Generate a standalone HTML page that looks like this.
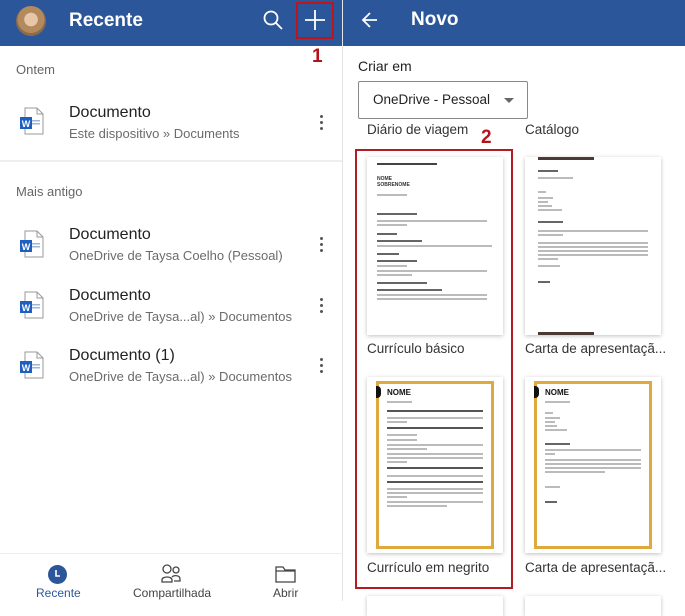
<!DOCTYPE html>
<html><head><meta charset="utf-8"><style>
*{margin:0;padding:0;box-sizing:border-box}
body{width:685px;height:601px;overflow:hidden;background:#fff;font-family:"Liberation Sans",Arial,sans-serif;position:relative}
.a{position:absolute;white-space:nowrap}
.hdr{position:absolute;top:0;height:46px;background:#2b579a}
.t{font-size:16px;color:#222}
.s{font-size:13px;color:#6b6b6b}
.g{font-size:13px;color:#666}
.keb{position:absolute;width:4px}
.keb i{display:block;width:3px;height:3px;border-radius:50%;background:#555;margin-bottom:3px}
.card{position:absolute;background:#fff;box-shadow:0 1px 4px rgba(0,0,0,.25)}
.ln{position:absolute;height:1.5px;background:#bbb}
.lbl{font-size:13.5px;color:#333}
</style></head><body>
<div class="hdr" style="left:0;width:342px"></div>
<div class="hdr" style="left:343px;width:342px"></div>
<div class="a" style="left:342px;top:0;width:1px;height:601px;background:#e5e5e5"></div>
<div class="a" style="left:16px;top:6px;width:30px;height:30px;border-radius:50%;background:radial-gradient(circle at 50% 45%,#e8c6a8 0 30%,#b28a5e 31% 60%,#8c6a4a 61%)"></div>
<div class="a" style="left:69px;top:10px;font-size:19px;font-weight:bold;color:#fff">Recente</div>
<svg class="a" style="left:262px;top:9px" width="22" height="22" viewBox="0 0 22 22"><circle cx="9" cy="9" r="6.5" fill="none" stroke="#fff" stroke-width="1.8"/><line x1="14" y1="14" x2="20" y2="20" stroke="#fff" stroke-width="1.8"/></svg>
<svg class="a" style="left:304px;top:9px" width="22" height="22"><line x1="11" y1="1" x2="11" y2="21" stroke="#fff" stroke-width="1.8"/><line x1="1" y1="11" x2="21" y2="11" stroke="#fff" stroke-width="1.8"/></svg>
<div class="a" style="left:296px;top:2px;width:38px;height:37px;border:2px solid #c0141b"></div>
<div class="a" style="left:312px;top:46px;font-size:19px;font-weight:bold;color:#b5121b">1</div>

<div class="a g" style="left:16px;top:62px">Ontem</div>
<div class="a" style="left:0;top:160px;width:342px;height:2px;background:#eee"></div>
<div class="a g" style="left:16px;top:184px">Mais antigo</div>

<div class="a t" style="left:69px;top:104px">Documento</div><div class="a s" style="left:69px;top:126px">Este dispositivo » Documents</div>
<div class="a t" style="left:69px;top:226px">Documento</div><div class="a s" style="left:69px;top:248px">OneDrive de Taysa Coelho (Pessoal)</div>
<div class="a t" style="left:69px;top:287px">Documento</div><div class="a s" style="left:69px;top:309px">OneDrive de Taysa...al) » Documentos</div>
<div class="a t" style="left:69px;top:347px">Documento (1)</div><div class="a s" style="left:69px;top:369px">OneDrive de Taysa...al) » Documentos</div>

<svg width="0" height="0" style="position:absolute"><defs><g id="w"><path d="M6 1h12l6 6v20H6z" fill="#fff" stroke="#999" stroke-width="1"/><path d="M18 1v6h6" fill="none" stroke="#999"/><rect x="12" y="13" width="9" height="1.5" fill="#9ab8e0"/><rect x="12" y="16" width="9" height="1.5" fill="#9ab8e0"/><rect x="1" y="10" width="12" height="12" fill="#1f5fbf"/><text x="7" y="20" font-size="9" font-weight="bold" fill="#fff" text-anchor="middle" font-family="Liberation Sans">W</text></g></defs></svg>
<svg class="a" style="left:19px;top:107px" width="26" height="30"><use href="#w"/></svg>
<svg class="a" style="left:19px;top:230px" width="26" height="30"><use href="#w"/></svg>
<svg class="a" style="left:19px;top:291px" width="26" height="30"><use href="#w"/></svg>
<svg class="a" style="left:19px;top:351px" width="26" height="30"><use href="#w"/></svg>
<div class="keb" style="left:320px;top:115px"><i></i><i></i><i></i></div>
<div class="keb" style="left:320px;top:237px"><i></i><i></i><i></i></div>
<div class="keb" style="left:320px;top:298px"><i></i><i></i><i></i></div>
<div class="keb" style="left:320px;top:358px"><i></i><i></i><i></i></div>

<div class="a" style="left:0;top:553px;width:342px;height:1px;background:#eee"></div>
<div class="a" style="left:48px;top:565px;width:19px;height:19px;border-radius:50%;background:#2b579a"></div>
<svg class="a" style="left:48px;top:565px" width="19" height="19"><path d="M8 5v6h4" fill="none" stroke="#fff" stroke-width="1.6"/></svg>
<div class="a" style="left:36px;top:586px;font-size:12px;color:#2b579a">Recente</div>
<svg class="a" style="left:160px;top:563px" width="22" height="22" fill="none" stroke="#444" stroke-width="1.3"><circle cx="7" cy="6" r="4"/><circle cx="16" cy="7" r="3"/><path d="M2 17c0-4 10-4 10 0v2H2z"/><path d="M12 14c2-2 8-2 8 2v2h-6"/></svg>
<div class="a" style="left:133px;top:586px;font-size:12px;color:#444">Compartilhada</div>
<svg class="a" style="left:275px;top:565px" width="22" height="18" fill="none" stroke="#444" stroke-width="1.3"><path d="M1 2h7l2 3h10v12H1z"/><path d="M1 6h19"/></svg>
<div class="a" style="left:273px;top:586px;font-size:12px;color:#444">Abrir</div>

<svg class="a" style="left:360px;top:11px" width="20" height="18"><path d="M17 9H3M10 2L3 9l7 7" fill="none" stroke="#fff" stroke-width="1.8"/></svg>
<div class="a" style="left:411px;top:9px;font-size:19px;font-weight:bold;color:#fff">Novo</div>
<div class="a" style="left:358px;top:58px;font-size:14px;color:#222">Criar em</div>
<div class="a" style="left:358px;top:81px;width:170px;height:38px;border:1px solid #888;border-radius:2px"></div>
<div class="a" style="left:373px;top:92px;font-size:13.5px;color:#222">OneDrive - Pessoal</div>
<div class="a" style="left:504px;top:98px;width:0;height:0;border-left:5px solid transparent;border-right:5px solid transparent;border-top:5px solid #666"></div>
<div class="a lbl" style="left:367px;top:122px">Diário de viagem</div>
<div class="a lbl" style="left:525px;top:122px">Catálogo</div>
<div class="a" style="left:481px;top:127px;font-size:19px;font-weight:bold;color:#b5121b">2</div>
<div class="a" style="left:355px;top:149px;width:158px;height:440px;border:2px solid #b01c22"></div>

<div class="card" style="left:367px;top:157px;width:136px;height:178px">
 <div class="a" style="left:10px;top:6px;width:60px;height:2px;background:#444"></div>
 <div class="a" style="left:10px;top:19px;font-size:5px;font-weight:bold;color:#333;line-height:6px">NOME<br>SOBRENOME</div>
 <div class="ln" style="left:10px;top:37px;width:30px"></div>
 <div class="ln" style="left:10px;top:56px;width:40px;background:#666"></div>
 <div class="ln" style="left:10px;top:63px;width:110px"></div><div class="ln" style="left:10px;top:67px;width:30px"></div>
 <div class="ln" style="left:10px;top:76px;width:20px;background:#666"></div>
 <div class="ln" style="left:10px;top:83px;width:45px;background:#666"></div><div class="ln" style="left:10px;top:88px;width:115px"></div>
 <div class="ln" style="left:10px;top:96px;width:22px;background:#666"></div>
 <div class="ln" style="left:10px;top:103px;width:40px;background:#666"></div><div class="ln" style="left:10px;top:108px;width:30px"></div><div class="ln" style="left:10px;top:113px;width:110px"></div><div class="ln" style="left:10px;top:117px;width:35px"></div>
 <div class="ln" style="left:10px;top:125px;width:50px;background:#666"></div>
 <div class="ln" style="left:10px;top:132px;width:65px;background:#666"></div><div class="ln" style="left:10px;top:137px;width:110px"></div><div class="ln" style="left:10px;top:141px;width:110px"></div>
</div>
<div class="a lbl" style="left:367px;top:341px">Currículo básico</div>
<div class="card" style="left:525px;top:157px;width:136px;height:178px">
 <div class="a" style="left:13px;top:0;width:56px;height:3px;background:#4a3a33"></div>
 <div class="a" style="left:13px;top:175px;width:56px;height:3px;background:#4a3a33"></div>
 <div class="ln" style="left:13px;top:13px;width:20px;background:#666"></div><div class="ln" style="left:13px;top:20px;width:35px"></div>
 <div class="ln" style="left:13px;top:34px;width:8px"></div><div class="ln" style="left:13px;top:40px;width:15px"></div><div class="ln" style="left:13px;top:44px;width:10px"></div><div class="ln" style="left:13px;top:48px;width:14px"></div><div class="ln" style="left:13px;top:52px;width:24px"></div>
 <div class="ln" style="left:13px;top:64px;width:25px;background:#666"></div>
 <div class="ln" style="left:13px;top:73px;width:110px"></div><div class="ln" style="left:13px;top:77px;width:25px"></div>
 <div class="ln" style="left:13px;top:85px;width:110px"></div><div class="ln" style="left:13px;top:89px;width:110px"></div><div class="ln" style="left:13px;top:93px;width:110px"></div><div class="ln" style="left:13px;top:97px;width:110px"></div><div class="ln" style="left:13px;top:101px;width:20px"></div>
 <div class="ln" style="left:13px;top:108px;width:22px"></div><div class="ln" style="left:13px;top:124px;width:12px;background:#666"></div>
</div>
<div class="a lbl" style="left:525px;top:341px">Carta de apresentaçã...</div>

<div class="card" style="left:367px;top:377px;width:136px;height:176px">
 <div class="a" style="left:9px;top:4px;width:118px;height:168px;border:3px solid #e0a93e"></div>
 <div class="a" style="left:9px;top:9px;width:5px;height:12px;background:#111;border-radius:0 4px 4px 0"></div>
 <div class="a" style="left:20px;top:11px;font-size:8px;font-weight:bold;color:#111">NOME</div>
 <div class="ln" style="left:20px;top:24px;width:25px"></div>
 <div class="ln" style="left:20px;top:33px;width:96px;background:#555"></div>
 <div class="ln" style="left:20px;top:40px;width:96px"></div><div class="ln" style="left:20px;top:44px;width:20px"></div>
 <div class="ln" style="left:20px;top:50px;width:96px;background:#555"></div>
 <div class="ln" style="left:20px;top:57px;width:30px"></div><div class="ln" style="left:20px;top:62px;width:30px"></div>
 <div class="ln" style="left:20px;top:67px;width:96px"></div><div class="ln" style="left:20px;top:71px;width:40px"></div>
 <div class="ln" style="left:20px;top:76px;width:96px"></div><div class="ln" style="left:20px;top:80px;width:96px"></div><div class="ln" style="left:20px;top:84px;width:20px"></div>
 <div class="ln" style="left:20px;top:90px;width:96px;background:#555"></div><div class="ln" style="left:20px;top:98px;width:96px"></div>
 <div class="ln" style="left:20px;top:104px;width:96px;background:#555"></div>
 <div class="ln" style="left:20px;top:111px;width:96px"></div><div class="ln" style="left:20px;top:115px;width:96px"></div><div class="ln" style="left:20px;top:119px;width:20px"></div>
 <div class="ln" style="left:20px;top:124px;width:96px"></div><div class="ln" style="left:20px;top:128px;width:60px"></div>
</div>
<div class="a lbl" style="left:367px;top:560px">Currículo em negrito</div>
<div class="card" style="left:525px;top:377px;width:136px;height:176px">
 <div class="a" style="left:9px;top:4px;width:118px;height:168px;border:3px solid #e0a93e"></div>
 <div class="a" style="left:9px;top:9px;width:5px;height:12px;background:#111;border-radius:0 4px 4px 0"></div>
 <div class="a" style="left:20px;top:11px;font-size:8px;font-weight:bold;color:#111">NOME</div>
 <div class="ln" style="left:20px;top:24px;width:25px"></div>
 <div class="ln" style="left:20px;top:35px;width:8px"></div><div class="ln" style="left:20px;top:40px;width:15px"></div><div class="ln" style="left:20px;top:44px;width:10px"></div><div class="ln" style="left:20px;top:48px;width:12px"></div><div class="ln" style="left:20px;top:52px;width:22px"></div>
 <div class="ln" style="left:20px;top:66px;width:25px;background:#666"></div>
 <div class="ln" style="left:20px;top:72px;width:96px"></div><div class="ln" style="left:20px;top:76px;width:10px"></div>
 <div class="ln" style="left:20px;top:82px;width:96px"></div><div class="ln" style="left:20px;top:86px;width:96px"></div><div class="ln" style="left:20px;top:90px;width:96px"></div><div class="ln" style="left:20px;top:94px;width:60px"></div>
 <div class="ln" style="left:20px;top:109px;width:15px"></div><div class="ln" style="left:20px;top:124px;width:12px;background:#666"></div>
</div>
<div class="a lbl" style="left:525px;top:560px">Carta de apresentaçã...</div>
<div class="card" style="left:367px;top:596px;width:136px;height:20px"></div>
<div class="card" style="left:525px;top:596px;width:136px;height:20px"></div>
</body></html>
